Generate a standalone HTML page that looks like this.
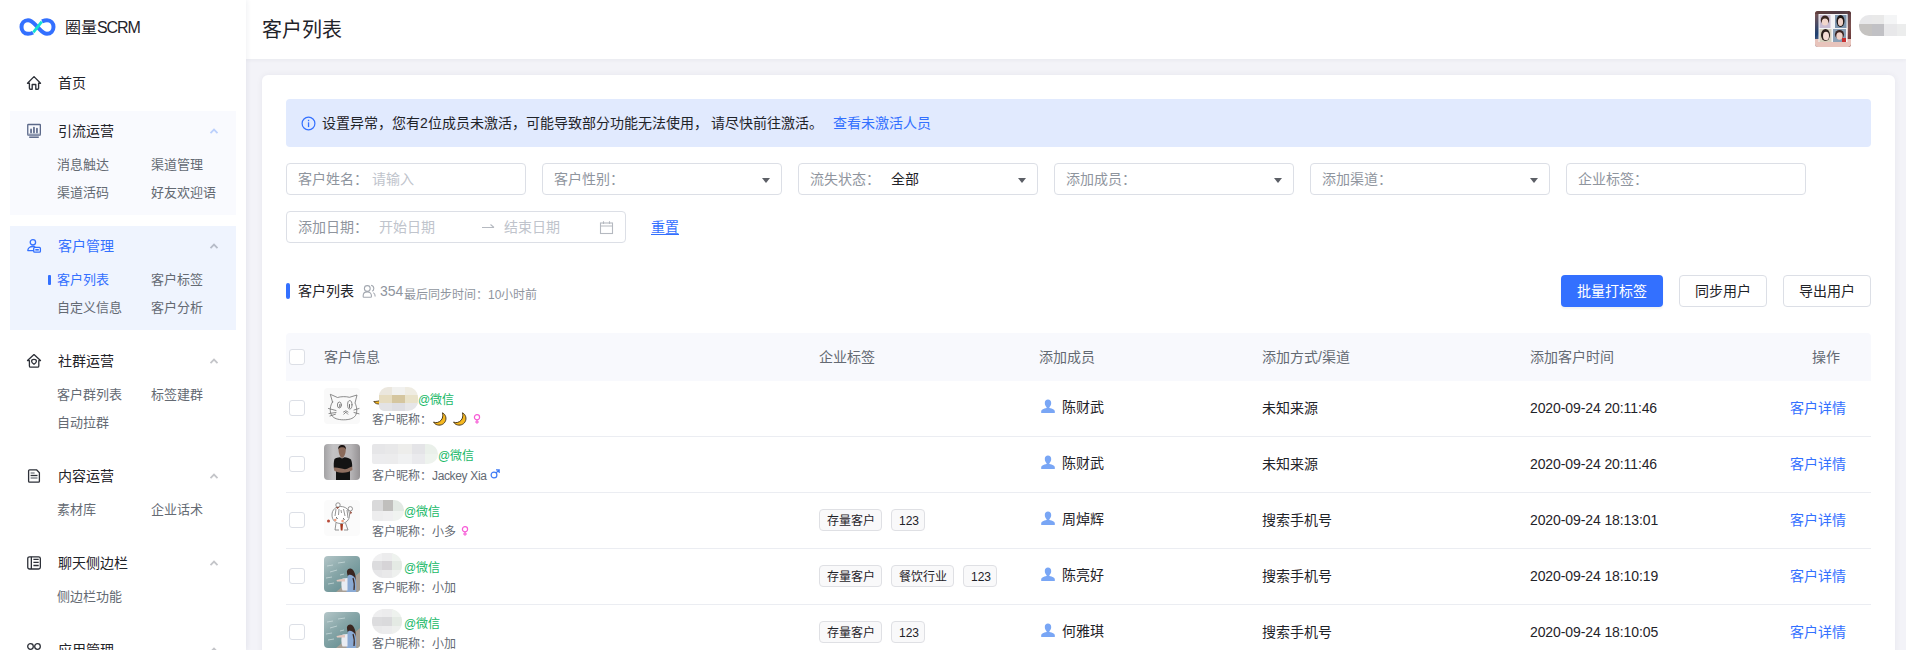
<!DOCTYPE html><html lang="zh-CN"><head><meta charset="utf-8"><style>
*{box-sizing:border-box;margin:0;padding:0}
html,body{width:1906px;height:650px;overflow:hidden;background:#f3f3f8;font-family:"Liberation Sans",sans-serif;color:#1f2329}
#side{position:absolute;z-index:5;left:0;top:0;width:246px;height:650px;background:#fff;box-shadow:1px 0 5px rgba(30,40,80,.07)}
#hdr{position:absolute;left:246px;top:0;width:1660px;height:59px;background:#fff;box-shadow:0 1px 4px rgba(20,30,60,.05)}
#card{position:absolute;left:262px;top:75px;width:1633px;height:600px;background:#fff;border-radius:6px;box-shadow:0 0 6px rgba(20,30,60,.06)}
.t{position:absolute;white-space:nowrap}
.box{position:absolute;border:1px solid #dcdfe6;border-radius:4px;background:#fff}
.tri{position:absolute;width:0;height:0;border-left:4.5px solid transparent;border-right:4.5px solid transparent;border-top:5.5px solid #5c5f66}
.btn{position:absolute;border:1px solid #dcdfe6;border-radius:4px;background:#fff}
.cb{position:absolute;width:16px;height:16px;border:1px solid #dcdfe6;border-radius:3px;background:#fff}
.tag{position:absolute;height:22px;border:1px solid #dfe0e4;background:#f9f9fa;border-radius:4px}
.line{position:absolute;height:1px;background:#ebedf2}
</style></head><body>
<div id="hdr"></div><div id="card"></div><div id="side">
<svg style="position:absolute;left:16px;top:14px" width="44" height="26" viewBox="0 0 44 26">
<path d="M17,18.6 C15.5,19.5 14,19.8 12,19.8 C8.2,19.8 5.5,16.8 5.5,13 C5.5,9.2 8.2,6.2 12,6.2 C16,6.2 18,9.5 21.5,13 C25,16.5 27,19.8 31,19.8 C34.8,19.8 37.5,16.8 37.5,13 C37.5,9.2 34.8,6.2 31,6.2 C29,6.2 27.5,6.8 26,7.4" fill="none" stroke="#3370ff" stroke-width="4"/>
<path d="M17.3,18.3 L25.8,7.7" fill="none" stroke="#14e2d2" stroke-width="2.8"/>
</svg>
<div class="t" style="left:65px;top:18.0px;font-size:16px;line-height:20px;color:#1f2329;">圈量<span style="letter-spacing:-1.1px">SCRM</span></div>
<svg style="position:absolute;left:26px;top:75px" width="16" height="16" viewBox="0 0 16 16" fill="none" stroke="#2d3038" stroke-width="1.35" stroke-linejoin="round">
<path d="M1.5 8.2 L8 1.6 L14.5 8.2 H12.6 V13.2 Q12.6 14.2 11.6 14.2 H9.8 V9.5 H6.2 V14.2 H4.4 Q3.4 14.2 3.4 13.2 V8.2 Z"/></svg>
<div class="t" style="left:58px;top:73.0px;font-size:14px;line-height:20px;color:#1f2329;">首页</div>
<div style="position:absolute;left:10px;top:111px;width:226px;height:104px;background:#f9fafe"></div>
<svg style="position:absolute;left:26px;top:123px" width="16" height="16" viewBox="0 0 16 16" fill="none" stroke="#5b6889" stroke-width="1.3" stroke-linejoin="round"><rect x="1.75" y="1.5" width="12.6" height="10.6" rx="0.6"/><path d="M1.75 11.5 H14.35" stroke-width="1.8" stroke="#8e98b0"/><path d="M3.2 14.2 H12.8" stroke-width="1.5"/><path d="M5.05 6.4 V9.4 M7.95 4.5 V9.4 M10.95 5.5 V9.4" stroke-width="1.7" stroke-linecap="round"/></svg>
<div class="t" style="left:58px;top:121.0px;font-size:14px;line-height:20px;color:#1f2329;">引流运营</div>
<svg style="position:absolute;left:208px;top:127px" width="12" height="8" viewBox="0 0 12 8"><path d="M2.5 6.1 L6 2.6 L9.5 6.1" fill="none" stroke="#bcd0fc" stroke-width="1.8"/></svg>
<div class="t" style="left:57px;top:155.0px;font-size:13px;line-height:20px;color:#646a73;">消息触达</div>
<div class="t" style="left:151px;top:155.0px;font-size:13px;line-height:20px;color:#646a73;">渠道管理</div>
<div class="t" style="left:57px;top:183.0px;font-size:13px;line-height:20px;color:#646a73;">渠道活码</div>
<div class="t" style="left:151px;top:183.0px;font-size:13px;line-height:20px;color:#646a73;">好友欢迎语</div>
<div style="position:absolute;left:10px;top:226px;width:226px;height:104px;background:#eff4fe"></div>
<svg style="position:absolute;left:26px;top:238px" width="16" height="16" viewBox="0 0 16 16" fill="none" stroke="#3370ff" stroke-width="1.3" stroke-linejoin="round"><circle cx="6.9" cy="4.3" r="2.7"/><path d="M9.3 9 C8.6 8.7 7.8 8.5 6.9 8.5 C3.8 8.5 1.8 10.4 1.8 12.6 H7.6"/><rect x="7.7" y="9.4" width="6.7" height="4.8" rx="1"/><rect x="9.3" y="11" width="3.5" height="1.6" fill="#3370ff" stroke="none"/></svg>
<div class="t" style="left:58px;top:236.0px;font-size:14px;line-height:20px;color:#3370ff;">客户管理</div>
<svg style="position:absolute;left:208px;top:242px" width="12" height="8" viewBox="0 0 12 8"><path d="M2.5 6.1 L6 2.6 L9.5 6.1" fill="none" stroke="#b6bcc8" stroke-width="1.8"/></svg>
<div style="position:absolute;left:48px;top:275px;width:3px;height:10px;background:#3370ff;border-radius:1px"></div>
<div class="t" style="left:57px;top:270.0px;font-size:13px;line-height:20px;color:#3370ff;">客户列表</div>
<div class="t" style="left:151px;top:270.0px;font-size:13px;line-height:20px;color:#646a73;">客户标签</div>
<div class="t" style="left:57px;top:298.0px;font-size:13px;line-height:20px;color:#646a73;">自定义信息</div>
<div class="t" style="left:151px;top:298.0px;font-size:13px;line-height:20px;color:#646a73;">客户分析</div>
<svg style="position:absolute;left:26px;top:353px" width="16" height="16" viewBox="0 0 16 16" fill="none" stroke="#2d3038" stroke-width="1.3" stroke-linejoin="round"><path d="M1.5 7.6 L8 1.6 L14.5 7.6 H12.8 V13 Q12.8 14.2 11.6 14.2 H4.6 Q3.4 14.2 3.4 13 V7.6 Z"/><path d="M8 11.3 C6.8 10.5 5.6 9.4 5.6 8.2 C5.6 7 6.6 6.4 8 6.4 C9.4 6.4 10.4 7 10.4 8.2 C10.4 9.4 9.2 10.5 8 11.3 Z"/></svg>
<div class="t" style="left:58px;top:351.0px;font-size:14px;line-height:20px;color:#1f2329;">社群运营</div>
<svg style="position:absolute;left:208px;top:357px" width="12" height="8" viewBox="0 0 12 8"><path d="M2.5 6.1 L6 2.6 L9.5 6.1" fill="none" stroke="#c4c5c9" stroke-width="1.8"/></svg>
<div class="t" style="left:57px;top:385.0px;font-size:13px;line-height:20px;color:#646a73;">客户群列表</div>
<div class="t" style="left:151px;top:385.0px;font-size:13px;line-height:20px;color:#646a73;">标签建群</div>
<div class="t" style="left:57px;top:413.0px;font-size:13px;line-height:20px;color:#646a73;">自动拉群</div>
<svg style="position:absolute;left:26px;top:468px" width="16" height="16" viewBox="0 0 16 16" fill="none" stroke="#2d3038" stroke-width="1.3" stroke-linejoin="round"><path d="M3.6 1.8 H10.5 L13.4 4.7 V13.2 Q13.4 14.2 12.4 14.2 H3.6 Q2.6 14.2 2.6 13.2 V2.8 Q2.6 1.8 3.6 1.8 Z"/><path d="M4.6 5 H8.6 M4.6 10 H11.5" stroke="#888c94" stroke-width="1.4"/><path d="M4.6 7.5 H11.5" stroke-width="1.3"/></svg>
<div class="t" style="left:58px;top:466.0px;font-size:14px;line-height:20px;color:#1f2329;">内容运营</div>
<svg style="position:absolute;left:208px;top:472px" width="12" height="8" viewBox="0 0 12 8"><path d="M2.5 6.1 L6 2.6 L9.5 6.1" fill="none" stroke="#c4c5c9" stroke-width="1.8"/></svg>
<div class="t" style="left:57px;top:500.0px;font-size:13px;line-height:20px;color:#646a73;">素材库</div>
<div class="t" style="left:151px;top:500.0px;font-size:13px;line-height:20px;color:#646a73;">企业话术</div>
<svg style="position:absolute;left:26px;top:555px" width="16" height="16" viewBox="0 0 16 16" fill="none" stroke="#2d3038" stroke-width="1.3" stroke-linejoin="round"><rect x="1.75" y="1.8" width="12.6" height="12.2" rx="1.8"/><path d="M5.35 1.8 V14 M7.4 4.4 H12.7 M7.4 7.4 H12.7 M7.4 10.5 H12.7"/></svg>
<div class="t" style="left:58px;top:553.0px;font-size:14px;line-height:20px;color:#1f2329;">聊天侧边栏</div>
<svg style="position:absolute;left:208px;top:559px" width="12" height="8" viewBox="0 0 12 8"><path d="M2.5 6.1 L6 2.6 L9.5 6.1" fill="none" stroke="#c4c5c9" stroke-width="1.8"/></svg>
<div class="t" style="left:57px;top:587.0px;font-size:13px;line-height:20px;color:#646a73;">侧边栏功能</div>
<svg style="position:absolute;left:26px;top:642px" width="16" height="16" viewBox="0 0 16 16" fill="none" stroke="#2d3038" stroke-width="1.3" stroke-linejoin="round"><circle cx="4.5" cy="4.5" r="2.8"/><circle cx="11.5" cy="4.5" r="2.8"/><circle cx="4.5" cy="11.5" r="2.8"/><circle cx="11.5" cy="11.5" r="2.8"/></svg>
<div class="t" style="left:58px;top:640.0px;font-size:14px;line-height:20px;color:#1f2329;">应用管理</div>
<svg style="position:absolute;left:208px;top:646px" width="12" height="8" viewBox="0 0 12 8"><path d="M2.5 6.1 L6 2.6 L9.5 6.1" fill="none" stroke="#c4c5c9" stroke-width="1.8"/></svg>
</div>
<div class="t" style="left:262px;top:17.5px;font-size:20px;line-height:24px;color:#1f2329;">客户列表</div>
<svg style="position:absolute;left:1815px;top:11px" width="36" height="36" viewBox="0 0 36 36">
<defs><linearGradient id="avf" x1="0" y1="0" x2="1" y2="1"><stop offset="0" stop-color="#8a5a50"/><stop offset="0.35" stop-color="#1d3f70"/><stop offset="0.7" stop-color="#e0b8b0"/><stop offset="1" stop-color="#7a1010"/></linearGradient>
<clipPath id="avc"><rect width="36" height="36" rx="3"/></clipPath></defs>
<g clip-path="url(#avc)">
<rect width="36" height="36" fill="url(#avf)"/>
<rect x="0" y="0" width="36" height="3" fill="#5a3a38" opacity="0.8"/>
<rect x="33" y="0" width="3" height="36" fill="#5a3030" opacity="0.75"/>
<rect x="0" y="28" width="36" height="8" fill="#e8c4bc"/>
<rect x="3.5" y="3" width="29" height="28" fill="#f4f4f6"/>
<rect x="4.5" y="4" width="11" height="13" fill="#c9bcd2"/>
<rect x="20" y="4" width="11.5" height="13" fill="#7d95ae"/>
<rect x="4.5" y="18" width="12" height="13" fill="#d6cfbc"/>
<rect x="18" y="18" width="13" height="13" fill="#8aa0b6"/>
<ellipse cx="10" cy="9" rx="4.2" ry="4.5" fill="#3a2620"/><ellipse cx="10" cy="11" rx="3.2" ry="3.6" fill="#f2d6cc"/>
<ellipse cx="25.5" cy="10" rx="4" ry="6" fill="#1e1614"/><ellipse cx="25.5" cy="11" rx="2.6" ry="4" fill="#eed0c6"/>
<ellipse cx="10.5" cy="24" rx="4.5" ry="6" fill="#2a1e1a"/><ellipse cx="11" cy="25" rx="3" ry="4.2" fill="#f4dcd4"/>
<ellipse cx="24.5" cy="23.5" rx="4.5" ry="4.5" fill="#3a2420"/><ellipse cx="24.5" cy="25" rx="3.2" ry="3.8" fill="#f0d2c8"/>
<rect x="27" y="27" width="4" height="4" fill="#c83030"/>
</g></svg>
<div style="position:absolute;left:1859px;top:15px;width:60px;height:21px;border-radius:10px 0 0 10px;overflow:hidden"><div style="position:absolute;left:0;top:0;width:12.5px;height:9px;background:#e8e8ea"></div><div style="position:absolute;left:12.5px;top:0;width:12.5px;height:9px;background:#e9e9e9"></div><div style="position:absolute;left:25px;top:0;width:12.5px;height:9px;background:#f4f5f6"></div><div style="position:absolute;left:0;top:9px;width:12.5px;height:12px;background:#c5c3c1"></div><div style="position:absolute;left:12.5px;top:9px;width:12.5px;height:12px;background:#c1c1c5"></div><div style="position:absolute;left:25px;top:9px;width:12.5px;height:12px;background:#e8e8ea"></div><div style="position:absolute;left:37.5px;top:9px;width:12.5px;height:12px;background:#eceded"></div></div>
<div style="position:absolute;left:286px;top:99px;width:1585px;height:48px;background:#e1eafe;border-radius:4px"></div>
<svg style="position:absolute;left:301px;top:116px" width="15" height="15" viewBox="0 0 15 15"><circle cx="7.5" cy="7.5" r="6.4" fill="none" stroke="#3370ff" stroke-width="1.2"/><rect x="6.9" y="6.3" width="1.3" height="4.8" fill="#3370ff"/><rect x="6.9" y="3.8" width="1.3" height="1.4" fill="#3370ff"/></svg>
<div class="t" style="left:322px;top:113.0px;font-size:14px;line-height:20px;color:#1f2329;">设置异常，您有2位成员未激活，可能导致部分功能无法使用，</div>
<div class="t" style="left:711px;top:113.0px;font-size:14px;line-height:20px;color:#1f2329;">请尽快前往激活。</div>
<div class="t" style="left:833px;top:113.0px;font-size:14px;line-height:20px;color:#3370ff;">查看未激活人员</div>
<div class="box" style="left:286px;top:163px;width:240px;height:32px"></div>
<div class="t" style="left:298px;top:169.0px;font-size:14px;line-height:20px;color:#8f959e;">客户姓名：</div>
<div class="t" style="left:372px;top:169.0px;font-size:14px;line-height:20px;color:#c0c4cc;">请输入</div>
<div class="box" style="left:542px;top:163px;width:240px;height:32px"></div>
<div class="t" style="left:554px;top:169.0px;font-size:14px;line-height:20px;color:#8f959e;">客户性别：</div>
<div class="tri" style="left:762px;top:177.5px"></div>
<div class="box" style="left:798px;top:163px;width:240px;height:32px"></div>
<div class="t" style="left:810px;top:169.0px;font-size:14px;line-height:20px;color:#8f959e;">流失状态：</div>
<div class="t" style="left:891px;top:169.0px;font-size:14px;line-height:20px;color:#1f2329;">全部</div>
<div class="tri" style="left:1018px;top:177.5px"></div>
<div class="box" style="left:1054px;top:163px;width:240px;height:32px"></div>
<div class="t" style="left:1066px;top:169.0px;font-size:14px;line-height:20px;color:#8f959e;">添加成员：</div>
<div class="tri" style="left:1274px;top:177.5px"></div>
<div class="box" style="left:1310px;top:163px;width:240px;height:32px"></div>
<div class="t" style="left:1322px;top:169.0px;font-size:14px;line-height:20px;color:#8f959e;">添加渠道：</div>
<div class="tri" style="left:1530px;top:177.5px"></div>
<div class="box" style="left:1566px;top:163px;width:240px;height:32px"></div>
<div class="t" style="left:1578px;top:169.0px;font-size:14px;line-height:20px;color:#8f959e;">企业标签：</div>
<div class="box" style="left:286px;top:211px;width:340px;height:32px"></div>
<div class="t" style="left:298px;top:217.0px;font-size:14px;line-height:20px;color:#8f959e;">添加日期：</div>
<div class="t" style="left:379px;top:217.0px;font-size:14px;line-height:20px;color:#c0c4cc;">开始日期</div>
<div class="t" style="left:504px;top:217.0px;font-size:14px;line-height:20px;color:#c0c4cc;">结束日期</div>
<svg style="position:absolute;left:480px;top:221px" width="16" height="12" viewBox="0 0 16 12"><path d="M2 6.5 H14 M10.5 3.5 L14 6.5" fill="none" stroke="#b5b9c0" stroke-width="1.1"/></svg>
<svg style="position:absolute;left:599px;top:220px" width="15" height="15" viewBox="0 0 15 15" fill="none" stroke="#b5b9c0" stroke-width="1.1"><rect x="1.5" y="3" width="12" height="10.5"/><path d="M1.5 6 H13.5 M4.5 1.2 V4 M10.5 1.2 V4"/></svg>
<div class="t" style="left:651px;top:217.0px;font-size:14px;line-height:20px;color:#3370ff;text-decoration:underline;text-underline-offset:2px">重置</div>
<div style="position:absolute;left:286px;top:283px;width:4px;height:16px;background:#3370ff;border-radius:2px"></div>
<div class="t" style="left:298px;top:281.0px;font-size:14px;line-height:20px;color:#1f2329;">客户列表</div>
<svg style="position:absolute;left:362px;top:284px" width="14" height="14" viewBox="0 0 14 14" fill="none" stroke="#a3a8b0" stroke-width="1.1"><circle cx="5.3" cy="4.5" r="2.9"/><path d="M1.2 12.7 V11.6 C1.2 9.4 3 7.9 5.3 7.9 C7.6 7.9 9.4 9.4 9.4 11.6 V12.7 Q9.4 13.3 8.8 13.3 H1.8 Q1.2 13.3 1.2 12.7 Z"/><path d="M9.1 1.2 C10.8 1.6 11.8 3 11.8 4.6 C11.8 5.8 11.2 6.8 10.3 7.3 M11.3 8.6 C12.6 9.4 13.2 10.8 13.2 12.4"/></svg>
<div class="t" style="left:380px;top:281.0px;font-size:14px;line-height:20px;color:#8f959e;">354</div>
<div class="t" style="left:404px;top:285.0px;font-size:12px;line-height:20px;color:#8f959e;">最后同步时间：10小时前</div>
<div style="position:absolute;left:1561px;top:275px;width:102px;height:32px;background:#3370ff;border-radius:4px;box-shadow:0 2px 2px rgba(0,0,0,.05)"></div>
<div class="t" style="left:1577px;top:281.0px;font-size:14px;line-height:20px;color:#fff;">批量打标签</div>
<div class="btn" style="left:1679px;top:275px;width:88px;height:32px"></div>
<div class="t" style="left:1695px;top:281.0px;font-size:14px;line-height:20px;color:#1f2329;">同步用户</div>
<div class="btn" style="left:1783px;top:275px;width:88px;height:32px"></div>
<div class="t" style="left:1799px;top:281.0px;font-size:14px;line-height:20px;color:#1f2329;">导出用户</div>
<div style="position:absolute;left:286px;top:333px;width:1585px;height:48px;background:#f8f9fd;border-radius:4px 4px 0 0"></div>
<div class="cb" style="left:289px;top:349px"></div>
<div class="t" style="left:324px;top:347.0px;font-size:14px;line-height:20px;color:#646a73;">客户信息</div>
<div class="t" style="left:819px;top:347.0px;font-size:14px;line-height:20px;color:#646a73;">企业标签</div>
<div class="t" style="left:1039px;top:347.0px;font-size:14px;line-height:20px;color:#646a73;">添加成员</div>
<div class="t" style="left:1262px;top:347.0px;font-size:14px;line-height:20px;color:#646a73;">添加方式/渠道</div>
<div class="t" style="left:1530px;top:347.0px;font-size:14px;line-height:20px;color:#646a73;">添加客户时间</div>
<div class="t" style="left:1812px;top:347.0px;font-size:14px;line-height:20px;color:#646a73;">操作</div>
<div class="line" style="left:286px;top:436px;width:1585px"></div>
<div class="cb" style="left:289px;top:400px"></div>
<div class="avatar" style="position:absolute;left:324px;top:388px;width:36px;height:36px;border-radius:4px;overflow:hidden"><svg width="36" height="36" viewBox="0 0 36 36"><rect width="36" height="36" fill="#f9f9f9"/>
<g fill="none" stroke="#6e6e6e" stroke-width="0.8" stroke-linejoin="round" stroke-linecap="round">
<path d="M8.5 14 L6.3 6.3 L13.5 9.5 C16.5 8.5 22 8.3 25.5 9.3 L33 7 L31 15 C33 19 33.5 24 31.5 27.5 C29 31 24.5 31.8 19.5 31.8 C14 31.8 9.5 30.5 7.5 27 C5.5 23.5 6 17.5 8.5 14 Z"/>
<ellipse cx="15.4" cy="17" rx="2" ry="3"/><ellipse cx="25.8" cy="16.8" rx="2.2" ry="4.2"/>
<path d="M15.8 16.5 V19 M25.5 16.5 V19.5" stroke-width="1"/>
<path d="M19.5 24 L21.8 22.8 L24 24 M21.8 24.2 L19.8 26.2 M21.8 24.2 L23.8 26.2"/>
<path d="M4.5 20.5 L12 22.5 M5 25.5 L12 24.5 M6 28 L11.5 26.2 M30 22 L35 20.5 M30 24.5 L35 25.8"/>
</g></svg></div>
<svg style="position:absolute;left:373px;top:398px" width="10" height="8" viewBox="0 0 10 8"><path d="M0.8 3.5 C2 5.5 4.5 6.5 7.5 5.8 L9 5 L8.5 2 C6.5 3 3.5 3.5 0.8 3.5 Z" fill="#f5b820" stroke="#3a2a10" stroke-width="0.8"/></svg>
<div style="position:absolute;left:379px;top:387px;width:39px;height:24px;border-radius:9px 10px 10px 5px;overflow:hidden">
<div style="position:absolute;left:0.0px;top:0.0px;width:13.5px;height:8.5px;background:#ebe7de"></div>
<div style="position:absolute;left:13.0px;top:0.0px;width:13.5px;height:8.5px;background:#f1f1ef"></div>
<div style="position:absolute;left:26.0px;top:0.0px;width:13.5px;height:8.5px;background:#efece2"></div>
<div style="position:absolute;left:0.0px;top:8.0px;width:13.5px;height:8.5px;background:#e6dcc0"></div>
<div style="position:absolute;left:13.0px;top:8.0px;width:13.5px;height:8.5px;background:#d5c69f"></div>
<div style="position:absolute;left:26.0px;top:8.0px;width:13.5px;height:8.5px;background:#e9e2c9"></div>
<div style="position:absolute;left:0.0px;top:16.0px;width:13.5px;height:8.5px;background:#e3e3e5"></div>
<div style="position:absolute;left:13.0px;top:16.0px;width:13.5px;height:8.5px;background:#dedee2"></div>
<div style="position:absolute;left:26.0px;top:16.0px;width:13.5px;height:8.5px;background:#e6e6e8"></div>
</div>
<div class="t" style="left:418px;top:389.5px;font-size:12px;line-height:20px;color:#17b867;">@微信</div>
<div class="t" style="left:372px;top:409.5px;font-size:12px;line-height:20px;color:#646a73;">客户昵称：</div>
<svg style="position:absolute;left:433px;top:412px" width="14" height="14" viewBox="0 0 14 14"><path d="M9.5 0.8 C12.8 2.5 13.8 6.5 12.2 9.6 C10.5 12.8 6.5 14 3.2 12.5 C1.8 11.8 0.9 10.8 0.6 10 C1.5 10.6 3 10.8 4.3 10.5 C7.5 9.8 9.8 7 9.8 3.8 C9.8 2.6 9.7 1.6 9.5 0.8 Z" fill="#f5b820" stroke="#3a2a10" stroke-width="0.9"/></svg>
<svg style="position:absolute;left:453px;top:412px" width="14" height="14" viewBox="0 0 14 14"><path d="M9.5 0.8 C12.8 2.5 13.8 6.5 12.2 9.6 C10.5 12.8 6.5 14 3.2 12.5 C1.8 11.8 0.9 10.8 0.6 10 C1.5 10.6 3 10.8 4.3 10.5 C7.5 9.8 9.8 7 9.8 3.8 C9.8 2.6 9.7 1.6 9.5 0.8 Z" fill="#f5b820" stroke="#3a2a10" stroke-width="0.9"/></svg>
<svg style="position:absolute;left:473px;top:414px" width="8" height="10" viewBox="0 0 8 10"><circle cx="4" cy="3.3" r="2.6" fill="none" stroke="#f75ad6" stroke-width="1.2"/><path d="M4 5.9 V9.8 M2 8 H6" stroke="#f75ad6" stroke-width="1.2"/></svg>
<svg style="position:absolute;left:1041px;top:399px" width="14" height="14" viewBox="0 0 14 14"><path d="M7 0.5 C9 0.5 10.2 2 10.2 4 C10.2 6 9.2 7.6 8.4 8.2 V9 C11.5 9.5 13.5 10.5 13.8 12 V14 H0.2 V12 C0.5 10.5 2.5 9.5 5.6 9 V8.2 C4.8 7.6 3.8 6 3.8 4 C3.8 2 5 0.5 7 0.5 Z" fill="#79a6f5"/></svg>
<div class="t" style="left:1062px;top:396.5px;font-size:14px;line-height:20px;color:#1f2329;">陈财武</div>
<div class="t" style="left:1262px;top:398.0px;font-size:14px;line-height:20px;color:#1f2329;">未知来源</div>
<div class="t" style="left:1530px;top:398.0px;font-size:14px;line-height:20px;color:#1f2329;letter-spacing:-0.1px">2020-09-24 20:11:46</div>
<div class="t" style="left:1790px;top:398.0px;font-size:14px;line-height:20px;color:#3370ff;">客户详情</div>
<div class="line" style="left:286px;top:492px;width:1585px"></div>
<div class="cb" style="left:289px;top:456px"></div>
<div class="avatar" style="position:absolute;left:324px;top:444px;width:36px;height:36px;border-radius:4px;overflow:hidden"><svg width="36" height="36" viewBox="0 0 36 36"><defs><linearGradient id="mg" x1="0" y1="0" x2="1" y2="0"><stop offset="0" stop-color="#a3a2a4"/><stop offset="0.25" stop-color="#c4c3c5"/><stop offset="0.75" stop-color="#b6b4b6"/><stop offset="1" stop-color="#959294"/></linearGradient></defs>
<rect width="36" height="36" fill="url(#mg)"/>
<path d="M14.5 5 C14.5 2.5 16 1.5 18 1.5 C20 1.5 21.8 2.5 21.8 5 C21.8 8 21 13 18 14 C15.5 13 14.5 8 14.5 5 Z" fill="#8a6a5a"/>
<path d="M14.3 5.5 C14 2 16 1 18 1 C20.5 1 22.2 2.3 21.8 5.5 C21 3.5 19.5 3.3 18 3.3 C16.5 3.3 15 3.6 14.3 5.5 Z" fill="#1c1614"/>
<path d="M10.5 15 C12 14 14 13.5 16 13.3 L18 14.5 L20.5 13.3 C23 13.6 25.5 14.3 27 15.5 C28 18 28.5 21 28 24 L26 25 V36 H12 V26 L10 25 C9.5 21 9.7 17.5 10.5 15 Z" fill="#131313"/>
<path d="M9.8 23.5 C13 23 18 24.8 21 25.2 C24 25 26.5 22.5 28.2 22.5 L28.5 26 C26 27.5 22 29 18 28.8 C14 28.5 11.5 27.5 10.3 26.8 Z" fill="#8f6f60"/>
</svg></div>
<div style="position:absolute;left:372px;top:444px;width:66px;height:20px;border-radius:2px 10px 10px 2px;overflow:hidden">
<div style="position:absolute;left:0.0px;top:0.0px;width:13.7px;height:10.5px;background:#e6e6e8"></div>
<div style="position:absolute;left:13.2px;top:0.0px;width:13.7px;height:10.5px;background:#e8e8e9"></div>
<div style="position:absolute;left:26.4px;top:0.0px;width:13.7px;height:10.5px;background:#ededeb"></div>
<div style="position:absolute;left:39.6px;top:0.0px;width:13.7px;height:10.5px;background:#e4e4e7"></div>
<div style="position:absolute;left:52.8px;top:0.0px;width:13.7px;height:10.5px;background:#eaf0ea"></div>
<div style="position:absolute;left:0.0px;top:10.0px;width:13.7px;height:10.5px;background:#ececee"></div>
<div style="position:absolute;left:13.2px;top:10.0px;width:13.7px;height:10.5px;background:#ececed"></div>
<div style="position:absolute;left:26.4px;top:10.0px;width:13.7px;height:10.5px;background:#f0f1f2"></div>
<div style="position:absolute;left:39.6px;top:10.0px;width:13.7px;height:10.5px;background:#eaeaed"></div>
<div style="position:absolute;left:52.8px;top:10.0px;width:13.7px;height:10.5px;background:#eef3ee"></div>
</div>
<div class="t" style="left:438px;top:445.5px;font-size:12px;line-height:20px;color:#17b867;">@微信</div>
<div class="t" style="left:372px;top:465.5px;font-size:12px;line-height:20px;color:#646a73;">客户昵称：<span style="letter-spacing:-0.35px">Jackey Xia</span></div>
<svg style="position:absolute;left:490px;top:469px" width="10" height="10" viewBox="0 0 10 10"><circle cx="4" cy="6" r="2.9" fill="none" stroke="#3f7bf5" stroke-width="1.2"/><path d="M6 4 L9.2 0.8 M6 0.8 H9.2 V4" fill="none" stroke="#3f7bf5" stroke-width="1.2"/></svg>
<svg style="position:absolute;left:1041px;top:455px" width="14" height="14" viewBox="0 0 14 14"><path d="M7 0.5 C9 0.5 10.2 2 10.2 4 C10.2 6 9.2 7.6 8.4 8.2 V9 C11.5 9.5 13.5 10.5 13.8 12 V14 H0.2 V12 C0.5 10.5 2.5 9.5 5.6 9 V8.2 C4.8 7.6 3.8 6 3.8 4 C3.8 2 5 0.5 7 0.5 Z" fill="#79a6f5"/></svg>
<div class="t" style="left:1062px;top:452.5px;font-size:14px;line-height:20px;color:#1f2329;">陈财武</div>
<div class="t" style="left:1262px;top:454.0px;font-size:14px;line-height:20px;color:#1f2329;">未知来源</div>
<div class="t" style="left:1530px;top:454.0px;font-size:14px;line-height:20px;color:#1f2329;letter-spacing:-0.1px">2020-09-24 20:11:46</div>
<div class="t" style="left:1790px;top:454.0px;font-size:14px;line-height:20px;color:#3370ff;">客户详情</div>
<div class="line" style="left:286px;top:548px;width:1585px"></div>
<div class="cb" style="left:289px;top:512px"></div>
<div class="avatar" style="position:absolute;left:324px;top:500px;width:36px;height:36px;border-radius:4px;overflow:hidden"><svg width="36" height="36" viewBox="0 0 36 36"><rect width="36" height="36" fill="#fbfbfb"/>
<g fill="none" stroke="#7a7a7a" stroke-width="0.8">
<path d="M8 15 C8 9.5 12 6.5 16.5 6.5 C21.5 6.5 25.5 9.5 25.5 15 C25.5 20 22 23.5 16.8 23.5 C11.5 23.5 8 20 8 15 Z" fill="#fff"/>
<circle cx="14" cy="5" r="2.2" fill="#fff"/><circle cx="26.3" cy="8.8" r="2.2" fill="#fff"/>
<path d="M12 9 L11 16 M15 9 L14.5 15 M19.5 9 L21 16 M23 10 L24 18 M17 10 L17.5 13"/>
<path d="M12 23 L11 30 H15 M21.5 23 L24 30 H20"/>
</g>
<path d="M12 7.5 L15.5 6.8 L13.5 9 Z M26 11 L28 12.5 L26.5 14.5 Z" fill="#8a3a2a"/>
<path d="M12 17.5 L13.5 18.5 M19 18.5 L20.5 19.5" stroke="#333" stroke-width="1"/>
<circle cx="11.2" cy="20" r="1.3" fill="#f0a080"/><circle cx="18.6" cy="21" r="1.3" fill="#f0a080"/>
<path d="M16.2 24 L19 24 L18.5 30.5 L16.8 30.5 Z" fill="#a83a20"/>
<circle cx="4.5" cy="21" r="1.5" fill="#b84a38"/>
</svg></div>
<div style="position:absolute;left:372px;top:500px;width:32px;height:21px;border-radius:2px 10px 10px 3px;overflow:hidden">
<div style="position:absolute;left:0.0px;top:0.0px;width:11.2px;height:11.0px;background:#d9d9da"></div>
<div style="position:absolute;left:10.7px;top:0.0px;width:11.2px;height:11.0px;background:#c0bfbd"></div>
<div style="position:absolute;left:21.3px;top:0.0px;width:11.2px;height:11.0px;background:#e3e9e4"></div>
<div style="position:absolute;left:0.0px;top:10.5px;width:11.2px;height:11.0px;background:#ededee"></div>
<div style="position:absolute;left:10.7px;top:10.5px;width:11.2px;height:11.0px;background:#efeff0"></div>
<div style="position:absolute;left:21.3px;top:10.5px;width:11.2px;height:11.0px;background:#f0f3f0"></div>
</div>
<div class="t" style="left:404px;top:501.5px;font-size:12px;line-height:20px;color:#17b867;">@微信</div>
<div class="t" style="left:372px;top:521.5px;font-size:12px;line-height:20px;color:#646a73;">客户昵称：小多</div>
<svg style="position:absolute;left:461px;top:526px" width="8" height="10" viewBox="0 0 8 10"><circle cx="4" cy="3.3" r="2.6" fill="none" stroke="#f75ad6" stroke-width="1.2"/><path d="M4 5.9 V9.8 M2 8 H6" stroke="#f75ad6" stroke-width="1.2"/></svg>
<div class="tag" style="left:819px;top:509px;width:63px"></div>
<div class="t" style="left:826.5px;top:510.5px;font-size:12px;line-height:20px;color:#1f2329;">存量客户</div>
<div class="tag" style="left:891px;top:509px;width:34px"></div>
<div class="t" style="left:899px;top:510.5px;font-size:12px;line-height:20px;color:#1f2329;">123</div>
<svg style="position:absolute;left:1041px;top:511px" width="14" height="14" viewBox="0 0 14 14"><path d="M7 0.5 C9 0.5 10.2 2 10.2 4 C10.2 6 9.2 7.6 8.4 8.2 V9 C11.5 9.5 13.5 10.5 13.8 12 V14 H0.2 V12 C0.5 10.5 2.5 9.5 5.6 9 V8.2 C4.8 7.6 3.8 6 3.8 4 C3.8 2 5 0.5 7 0.5 Z" fill="#79a6f5"/></svg>
<div class="t" style="left:1062px;top:508.5px;font-size:14px;line-height:20px;color:#1f2329;">周焯辉</div>
<div class="t" style="left:1262px;top:510.0px;font-size:14px;line-height:20px;color:#1f2329;">搜索手机号</div>
<div class="t" style="left:1530px;top:510.0px;font-size:14px;line-height:20px;color:#1f2329;letter-spacing:-0.1px">2020-09-24 18:13:01</div>
<div class="t" style="left:1790px;top:510.0px;font-size:14px;line-height:20px;color:#3370ff;">客户详情</div>
<div class="line" style="left:286px;top:604px;width:1585px"></div>
<div class="cb" style="left:289px;top:568px"></div>
<div class="avatar" style="position:absolute;left:324px;top:556px;width:36px;height:36px;border-radius:4px;overflow:hidden"><svg width="36" height="36" viewBox="0 0 36 36"><defs><linearGradient id="sg" x1="0" y1="0" x2="0.8" y2="1"><stop offset="0" stop-color="#b4c6c8"/><stop offset="0.45" stop-color="#87a6a8"/><stop offset="1" stop-color="#5f8a8e"/></linearGradient></defs>
<rect width="36" height="36" fill="url(#sg)"/>
<path d="M3 10 L9 9 M6 16 L13 14 M2 22 L8 21 M14 7 L21 6 M4 28 L10 27 M16 19 L20 18" stroke="#d0e0e0" stroke-width="1" opacity="0.7"/>
<path d="M12 36 L24 26 L36 16 V36 Z" fill="#a8a096"/>
<path d="M26 12.5 C23.5 12.8 22.5 15 23 17 C23.5 19.5 24.5 22 25.5 25 L31.5 26 C32 22 31.5 18 30 15.5 C29 13.5 27.5 12.3 26 12.5 Z" fill="#3a2620"/>
<path d="M24.5 19 C23 21 22.5 26 22.5 36 H32 C32.5 31 32.5 25 31 22 C29.5 19.5 26.5 18 24.5 19 Z" fill="#8aaad4"/>
<path d="M18.5 22.5 C17 25 17 31 18.5 34.5 H23.5 V22 Z" fill="#e9ecf2"/>
<path d="M12.5 24 C15 23.3 18 22.8 21 23 L21 25.5 C18 25.6 15 25.6 13 25.4 Z" fill="#e3c8bf"/>
<path d="M29 22 C30.5 26 30.5 30 30 34" stroke="#3a2620" stroke-width="1.2" fill="none"/>
</svg></div>
<div style="position:absolute;left:372px;top:553px;width:30px;height:25px;border-radius:12px 12px 12px 12px;overflow:hidden">
<div style="position:absolute;left:0.0px;top:0.0px;width:10.5px;height:8.8px;background:#f0f0f1"></div>
<div style="position:absolute;left:10.0px;top:0.0px;width:10.5px;height:8.8px;background:#ececed"></div>
<div style="position:absolute;left:20.0px;top:0.0px;width:10.5px;height:8.8px;background:#eef2ee"></div>
<div style="position:absolute;left:0.0px;top:8.3px;width:10.5px;height:8.8px;background:#dcdcde"></div>
<div style="position:absolute;left:10.0px;top:8.3px;width:10.5px;height:8.8px;background:#d6d4d7"></div>
<div style="position:absolute;left:20.0px;top:8.3px;width:10.5px;height:8.8px;background:#e4eae4"></div>
<div style="position:absolute;left:0.0px;top:16.7px;width:10.5px;height:8.8px;background:#e6e6e8"></div>
<div style="position:absolute;left:10.0px;top:16.7px;width:10.5px;height:8.8px;background:#e9e9ea"></div>
<div style="position:absolute;left:20.0px;top:16.7px;width:10.5px;height:8.8px;background:#eef0ee"></div>
</div>
<div class="t" style="left:404px;top:557.5px;font-size:12px;line-height:20px;color:#17b867;">@微信</div>
<div class="t" style="left:372px;top:577.5px;font-size:12px;line-height:20px;color:#646a73;">客户昵称：小加</div>
<div class="tag" style="left:819px;top:565px;width:63px"></div>
<div class="t" style="left:826.5px;top:566.5px;font-size:12px;line-height:20px;color:#1f2329;">存量客户</div>
<div class="tag" style="left:891px;top:565px;width:63px"></div>
<div class="t" style="left:898.5px;top:566.5px;font-size:12px;line-height:20px;color:#1f2329;">餐饮行业</div>
<div class="tag" style="left:963px;top:565px;width:34px"></div>
<div class="t" style="left:971px;top:566.5px;font-size:12px;line-height:20px;color:#1f2329;">123</div>
<svg style="position:absolute;left:1041px;top:567px" width="14" height="14" viewBox="0 0 14 14"><path d="M7 0.5 C9 0.5 10.2 2 10.2 4 C10.2 6 9.2 7.6 8.4 8.2 V9 C11.5 9.5 13.5 10.5 13.8 12 V14 H0.2 V12 C0.5 10.5 2.5 9.5 5.6 9 V8.2 C4.8 7.6 3.8 6 3.8 4 C3.8 2 5 0.5 7 0.5 Z" fill="#79a6f5"/></svg>
<div class="t" style="left:1062px;top:564.5px;font-size:14px;line-height:20px;color:#1f2329;">陈亮好</div>
<div class="t" style="left:1262px;top:566.0px;font-size:14px;line-height:20px;color:#1f2329;">搜索手机号</div>
<div class="t" style="left:1530px;top:566.0px;font-size:14px;line-height:20px;color:#1f2329;letter-spacing:-0.1px">2020-09-24 18:10:19</div>
<div class="t" style="left:1790px;top:566.0px;font-size:14px;line-height:20px;color:#3370ff;">客户详情</div>
<div class="line" style="left:286px;top:660px;width:1585px"></div>
<div class="cb" style="left:289px;top:624px"></div>
<div class="avatar" style="position:absolute;left:324px;top:612px;width:36px;height:36px;border-radius:4px;overflow:hidden"><svg width="36" height="36" viewBox="0 0 36 36"><defs><linearGradient id="sg" x1="0" y1="0" x2="0.8" y2="1"><stop offset="0" stop-color="#b4c6c8"/><stop offset="0.45" stop-color="#87a6a8"/><stop offset="1" stop-color="#5f8a8e"/></linearGradient></defs>
<rect width="36" height="36" fill="url(#sg)"/>
<path d="M3 10 L9 9 M6 16 L13 14 M2 22 L8 21 M14 7 L21 6 M4 28 L10 27 M16 19 L20 18" stroke="#d0e0e0" stroke-width="1" opacity="0.7"/>
<path d="M12 36 L24 26 L36 16 V36 Z" fill="#a8a096"/>
<path d="M26 12.5 C23.5 12.8 22.5 15 23 17 C23.5 19.5 24.5 22 25.5 25 L31.5 26 C32 22 31.5 18 30 15.5 C29 13.5 27.5 12.3 26 12.5 Z" fill="#3a2620"/>
<path d="M24.5 19 C23 21 22.5 26 22.5 36 H32 C32.5 31 32.5 25 31 22 C29.5 19.5 26.5 18 24.5 19 Z" fill="#8aaad4"/>
<path d="M18.5 22.5 C17 25 17 31 18.5 34.5 H23.5 V22 Z" fill="#e9ecf2"/>
<path d="M12.5 24 C15 23.3 18 22.8 21 23 L21 25.5 C18 25.6 15 25.6 13 25.4 Z" fill="#e3c8bf"/>
<path d="M29 22 C30.5 26 30.5 30 30 34" stroke="#3a2620" stroke-width="1.2" fill="none"/>
</svg></div>
<div style="position:absolute;left:372px;top:609px;width:30px;height:25px;border-radius:12px 12px 12px 12px;overflow:hidden">
<div style="position:absolute;left:0.0px;top:0.0px;width:10.5px;height:8.8px;background:#eeeeef"></div>
<div style="position:absolute;left:10.0px;top:0.0px;width:10.5px;height:8.8px;background:#ececed"></div>
<div style="position:absolute;left:20.0px;top:0.0px;width:10.5px;height:8.8px;background:#eef2ee"></div>
<div style="position:absolute;left:0.0px;top:8.3px;width:10.5px;height:8.8px;background:#dcdcde"></div>
<div style="position:absolute;left:10.0px;top:8.3px;width:10.5px;height:8.8px;background:#dadadc"></div>
<div style="position:absolute;left:20.0px;top:8.3px;width:10.5px;height:8.8px;background:#e4eae4"></div>
<div style="position:absolute;left:0.0px;top:16.7px;width:10.5px;height:8.8px;background:#eaeaeb"></div>
<div style="position:absolute;left:10.0px;top:16.7px;width:10.5px;height:8.8px;background:#ececed"></div>
<div style="position:absolute;left:20.0px;top:16.7px;width:10.5px;height:8.8px;background:#eef0ee"></div>
</div>
<div class="t" style="left:404px;top:613.5px;font-size:12px;line-height:20px;color:#17b867;">@微信</div>
<div class="t" style="left:372px;top:633.5px;font-size:12px;line-height:20px;color:#646a73;">客户昵称：小加</div>
<div class="tag" style="left:819px;top:621px;width:63px"></div>
<div class="t" style="left:826.5px;top:622.5px;font-size:12px;line-height:20px;color:#1f2329;">存量客户</div>
<div class="tag" style="left:891px;top:621px;width:34px"></div>
<div class="t" style="left:899px;top:622.5px;font-size:12px;line-height:20px;color:#1f2329;">123</div>
<svg style="position:absolute;left:1041px;top:623px" width="14" height="14" viewBox="0 0 14 14"><path d="M7 0.5 C9 0.5 10.2 2 10.2 4 C10.2 6 9.2 7.6 8.4 8.2 V9 C11.5 9.5 13.5 10.5 13.8 12 V14 H0.2 V12 C0.5 10.5 2.5 9.5 5.6 9 V8.2 C4.8 7.6 3.8 6 3.8 4 C3.8 2 5 0.5 7 0.5 Z" fill="#79a6f5"/></svg>
<div class="t" style="left:1062px;top:620.5px;font-size:14px;line-height:20px;color:#1f2329;">何雅琪</div>
<div class="t" style="left:1262px;top:622.0px;font-size:14px;line-height:20px;color:#1f2329;">搜索手机号</div>
<div class="t" style="left:1530px;top:622.0px;font-size:14px;line-height:20px;color:#1f2329;letter-spacing:-0.1px">2020-09-24 18:10:05</div>
<div class="t" style="left:1790px;top:622.0px;font-size:14px;line-height:20px;color:#3370ff;">客户详情</div>
</body></html>
